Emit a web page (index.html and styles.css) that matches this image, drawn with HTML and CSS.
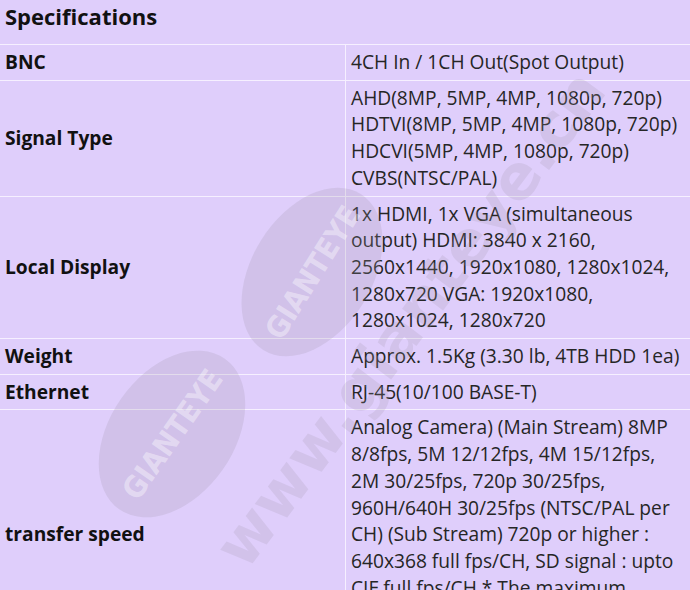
FILE: index.html
```html
<!DOCTYPE html>
<html lang="en">
<head>
    <meta charset="UTF-8">
    <meta name="viewport" content="width=device-width, initial-scale=1.0">
    <title>Specifications</title>
    <link rel="stylesheet" href="styles.css">
</head>
<body>
    <section class="spec">
        <h3 class="spec-title">Specifications</h3>
        <table class="spec-table">
            <tr>
                <th>BNC</th>
                <td>4CH In / 1CH Out(Spot Output)</td>
            </tr>
            <tr>
                <th>Signal Type</th>
                <td>AHD(8MP, 5MP, 4MP, 1080p, 720p)<br>HDTVI(8MP, 5MP, 4MP, 1080p, 720p)<br>HDCVI(5MP, 4MP, 1080p, 720p)<br>CVBS(NTSC/PAL)</td>
            </tr>
            <tr>
                <th>Local Display</th>
                <td>1x HDMI, 1x VGA (simultaneous output) HDMI: 3840 x 2160, 2560x1440, 1920x1080, 1280x1024, 1280x720 VGA: 1920x1080, 1280x1024, 1280x720</td>
            </tr>
            <tr>
                <th>Weight</th>
                <td>Approx. 1.5Kg (3.30 lb, 4TB HDD 1ea)</td>
            </tr>
            <tr>
                <th>Ethernet</th>
                <td>RJ-45(10/100 BASE-T)</td>
            </tr>
            <tr>
                <th>transfer speed</th>
                <td>Analog Camera) (Main Stream) 8MP 8/8fps, 5M 12/12fps, 4M 15/12fps, 2M 30/25fps, 720p 30/25fps, 960H/640H 30/25fps (NTSC/PAL per CH) (Sub Stream) 720p or higher : 640x368 full fps/CH, SD signal : upto CIF full fps/CH * The maximum transfer speed may vary depending on the network environment.</td>
            </tr>
        </table>

        <!-- watermark -->
        <svg class="watermark" width="690" height="590" viewBox="0 0 690 590">
            <g transform="rotate(-58 312 272)">
                <ellipse cx="312" cy="272" rx="92" ry="60" class="wm-disc"/>
                <text x="312" y="283" class="wm-logo">GIANTEYE</text>
            </g>
            <g transform="rotate(-55 172 434)">
                <ellipse cx="172" cy="434" rx="92" ry="62" class="wm-disc"/>
                <text x="172" y="445" class="wm-logo">GIANTEYE</text>
            </g>
            <text x="0" y="0" class="wm-url" transform="translate(246 572) rotate(-53)">www.gianteye.cn</text>
        </svg>
    </section>
</body>
</html>
```

FILE: styles.css
```css
/* Page */
body {
    margin: 0;
    background: #dfcefb;
    font-family: 'Open Sans', 'Noto Sans', sans-serif;
    color: #222;
    overflow: hidden;
}

.spec {
    position: relative;
}

.spec-title {
    margin: 0;
    height: 45px;
    padding: 1px 5px 0;
    box-sizing: border-box;
    font-size: 22px;
    font-weight: 700;
    line-height: 30px;
    color: #111;
    border-bottom: 1px solid #f6f0ff;
}

/* Table */
.spec-table {
    width: 100%;
    border-collapse: collapse;
    font-size: 19.2px;
    line-height: 26.7px;
}

.spec-table th,
.spec-table td {
    padding: 4px 5px;
    border-bottom: 1px solid #f6f0ff;
    vertical-align: middle;
}

.spec-table th {
    width: 335px;
    text-align: left;
    font-weight: 700;
    color: #111;
    border-right: 1px solid #f6f0ff;
}

.spec-table td {
    color: #262626;
}

/* Watermark */
.watermark {
    position: absolute;
    top: 0;
    left: 0;
    pointer-events: none;
}

.wm-disc {
    fill: rgba(160, 150, 170, 0.22);
}

.wm-logo {
    fill: rgba(255, 255, 255, 0.4);
    font-family: 'DejaVu Sans Condensed', 'Liberation Sans Narrow', sans-serif;
    font-weight: 700;
    font-size: 30px;
    text-anchor: middle;
}

.wm-url {
    fill: rgba(160, 150, 170, 0.2);
    font-family: 'DejaVu Sans', sans-serif;
    font-weight: 700;
    font-size: 62px;
}
```
